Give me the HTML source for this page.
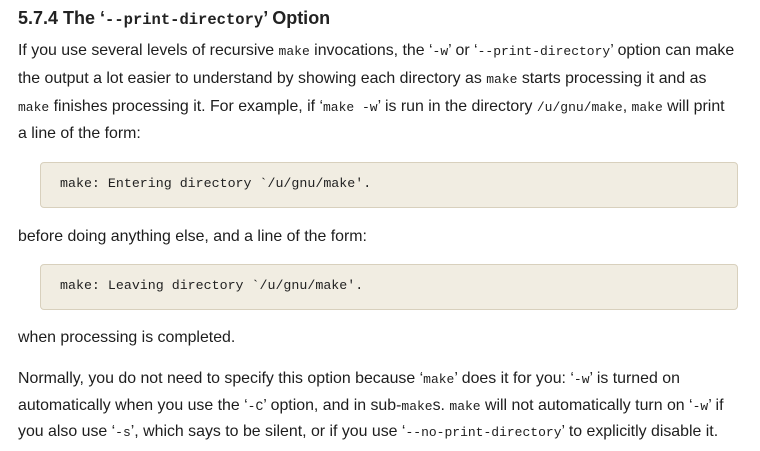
<!DOCTYPE html>
<html><head><meta charset="utf-8"><style>
body{margin:0;background:#fff;width:760px;height:451px;overflow:hidden;font-family:"Liberation Sans",sans-serif;color:#1d1d1d;}
.l{position:absolute;left:18px;font-size:15.9px;white-space:nowrap;line-height:20px;}
code,.c{font-family:"Liberation Mono",monospace;font-size:13px;}
h3{position:absolute;left:18px;top:6px;margin:0;font-size:18px;font-weight:bold;white-space:nowrap;line-height:24px;color:#222}
h3 code{font-size:15.5px;}
.box{position:absolute;left:40px;width:696px;height:44px;background:#f1ede2;border:1px solid #d8d0bd;border-radius:4px;}
.box span{position:absolute;left:19px;top:13px;font-family:"Liberation Mono",monospace;font-size:13.3px;color:#222}
</style></head><body>
<h3>5.7.4 The ‘<code>--print-directory</code>’ Option</h3>
<div class="l" style="top:41px">If you use several levels of recursive <code>make</code> invocations, the ‘<code>-w</code>’ or ‘<code>--print-directory</code>’ option can make</div>
<div class="l" style="top:69px">the output a lot easier to understand by showing each directory as <code>make</code> starts processing it and as</div>
<div class="l" style="top:97px"><code>make</code> finishes processing it. For example, if ‘<code>make -w</code>’ is run in the directory <code>/u/gnu/make</code>, <code>make</code> will print</div>
<div class="l" style="top:124px">a line of the form:</div>
<div class="box" style="top:162px"><span>make: Entering directory `/u/gnu/make'.</span></div>
<div class="l" style="top:227px">before doing anything else, and a line of the form:</div>
<div class="box" style="top:264px"><span>make: Leaving directory `/u/gnu/make'.</span></div>
<div class="l" style="top:328px">when processing is completed.</div>
<div class="l" style="top:369px">Normally, you do not need to specify this option because ‘<code>make</code>’ does it for you: ‘<code>-w</code>’ is turned on</div>
<div class="l" style="top:396px">automatically when you use the ‘<code>-C</code>’ option, and in sub-<code>make</code>s. <code>make</code> will not automatically turn on ‘<code>-w</code>’ if</div>
<div class="l" style="top:422px">you also use ‘<code>-s</code>’, which says to be silent, or if you use ‘<code>--no-print-directory</code>’ to explicitly disable it.</div>
</body></html>
